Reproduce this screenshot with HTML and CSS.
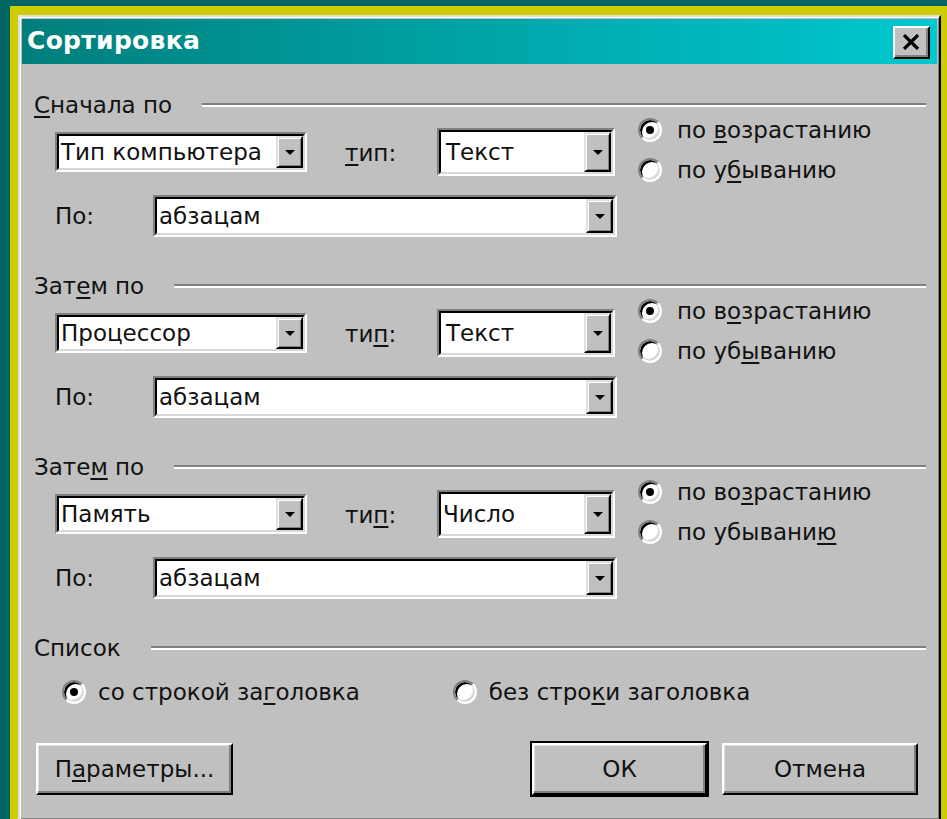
FILE: index.html
```html
<!DOCTYPE html>
<html lang="ru">
<head>
<meta charset="utf-8">
<title>Сортировка</title>
<link rel="stylesheet" href="styles.css">
</head>
<body>
<div class="frame">
  <div class="dialog">
    <div class="titlebar">
      <span class="title">Сортировка</span>
      <button class="close" type="button" aria-label="Закрыть">
        <svg width="18" height="16" viewBox="0 0 18 16"><path d="M2 1 L16 15 M16 1 L2 15" stroke="#000" stroke-width="3.2" fill="none"/></svg>
      </button>
    </div>

    <div class="content">
      <section class="group">
        <div class="legend"><span><u>С</u>начала по</span><i class="rule"></i></div>
        <div class="row-main">
          <div class="combo combo-key"><div class="field"><span class="value">Тип компьютера</span><span class="drop"><i></i></span></div></div>
          <span class="lbl lbl-type"><u>т</u>ип:</span>
          <div class="combo combo-type"><div class="field"><span class="value pad">Текст</span><span class="drop"><i></i></span></div></div>
          <div class="radios">
            <div class="radio"><span class="dot on"></span><span class="text">по <u>в</u>озрастанию</span></div>
            <div class="radio"><span class="dot"></span><span class="text">по у<u>б</u>ыванию</span></div>
          </div>
        </div>
        <div class="row-by">
          <span class="lbl lbl-by">По:</span>
          <div class="combo combo-by"><div class="field"><span class="value">абзацам</span><span class="drop"><i></i></span></div></div>
        </div>
      </section>

      <section class="group">
        <div class="legend"><span>Зат<u>е</u>м по</span><i class="rule"></i></div>
        <div class="row-main">
          <div class="combo combo-key"><div class="field"><span class="value">Процессор</span><span class="drop"><i></i></span></div></div>
          <span class="lbl lbl-type">ти<u>п</u>:</span>
          <div class="combo combo-type"><div class="field"><span class="value pad">Текст</span><span class="drop"><i></i></span></div></div>
          <div class="radios">
            <div class="radio"><span class="dot on"></span><span class="text">по в<u>о</u>зрастанию</span></div>
            <div class="radio"><span class="dot"></span><span class="text">по уб<u>ы</u>ванию</span></div>
          </div>
        </div>
        <div class="row-by">
          <span class="lbl lbl-by">По:</span>
          <div class="combo combo-by"><div class="field"><span class="value">абзацам</span><span class="drop"><i></i></span></div></div>
        </div>
      </section>

      <section class="group">
        <div class="legend"><span>Зате<u>м</u> по</span><i class="rule"></i></div>
        <div class="row-main">
          <div class="combo combo-key"><div class="field"><span class="value">Память</span><span class="drop"><i></i></span></div></div>
          <span class="lbl lbl-type">ти<u>п</u>:</span>
          <div class="combo combo-type"><div class="field"><span class="value">Число</span><span class="drop"><i></i></span></div></div>
          <div class="radios">
            <div class="radio"><span class="dot on"></span><span class="text">по во<u>з</u>растанию</span></div>
            <div class="radio"><span class="dot"></span><span class="text">по убывани<u>ю</u></span></div>
          </div>
        </div>
        <div class="row-by">
          <span class="lbl lbl-by">По:</span>
          <div class="combo combo-by"><div class="field"><span class="value">абзацам</span><span class="drop"><i></i></span></div></div>
        </div>
      </section>

      <section class="group group-list">
        <div class="legend"><span>Список</span><i class="rule"></i></div>
        <div class="row-list">
          <div class="radio radio-with"><span class="dot on"></span><span class="text">со строкой за<u>г</u>оловка</span></div>
          <div class="radio radio-without"><span class="dot"></span><span class="text">без стро<u>к</u>и заголовка</span></div>
        </div>
      </section>

      <div class="buttons">
        <button class="btn btn-params" type="button">П<u>а</u>раметры...</button>
        <span class="spacer"></span>
        <button class="btn btn-ok" type="button">ОК</button>
        <button class="btn btn-cancel" type="button">Отмена</button>
      </div>
    </div>
  </div>
</div>
</body>
</html>
```

FILE: styles.css
```css
html, body {
  margin: 0;
  padding: 0;
}

body {
  background: #006662;
  height: 819px;
  overflow: hidden;
  font-family: "DejaVu Sans", "Liberation Sans", sans-serif;
  font-size: 23px;
  color: #111;
}

u {
  text-decoration: underline;
  text-underline-offset: 3px;
  text-decoration-thickness: 2px;
}

/* yellow desktop frame around the window */
.frame {
  margin: 6px 0 0 10px;
  height: 813px;
  box-sizing: border-box;
  padding: 9px 6px 0 8px;
  background: #cccc00;
}

.dialog {
  height: 806px;
  box-sizing: border-box;
  background: #c0c0c0;
  border: 2px solid;
  border-color: #e0e0e0 #000 #000 #e0e0e0;
  box-shadow: inset 1px 1px 0 #fff, inset -1px -1px 0 #808080;
  padding: 2px;
}

/* caption */
.titlebar {
  height: 45px;
  display: flex;
  align-items: center;
  padding: 0 7px 0 5px;
  background: linear-gradient(to right, #007e7c 0%, #00a8ac 55%, #00c8cf 100%);
}

.title {
  flex: 1;
  color: #fff;
  font-weight: bold;
  font-size: 25px;
  letter-spacing: 0.3px;
  margin-top: -2px;
}

.close {
  width: 37px;
  height: 33px;
  margin-top: 2px;
  padding: 0;
  display: flex;
  align-items: center;
  justify-content: center;
  background: #c0c0c0;
  border: 2px solid;
  border-color: #fff #000 #000 #fff;
  box-shadow: inset -2px -2px 0 #808080;
}

.close svg {
  margin: -2px 0 0 -1px;
}

/* dialog body */
.content {
  padding: 29px 11px 0 12px;
}

.group {
  margin-bottom: 37px;
}

.legend {
  height: 24px;
  display: flex;
  align-items: center;
  line-height: 24px;
}

.rule {
  flex: 1;
  height: 0;
  margin-left: 30px;
  border-top: 2px solid #808080;
  border-bottom: 2px solid #fff;
}

.row-main {
  margin-top: 1px;
  height: 68px;
  display: flex;
  align-items: center;
  padding-left: 21px;
}

.row-by {
  margin-top: 9px;
  display: flex;
  align-items: center;
  padding-left: 21px;
}

.lbl {
  line-height: 24px;
}

.lbl-type {
  width: 92px;
  margin-left: 38px;
  padding-top: 2px;
  box-sizing: border-box;
}

.lbl-by {
  width: 98px;
}

/* sunken combo box */
.combo {
  box-sizing: border-box;
  border: 2px solid;
  border-color: #808080 #fff #fff #808080;
}

.field {
  height: 100%;
  box-sizing: border-box;
  border: 2px solid;
  border-color: #000 #d8d8d8 #d8d8d8 #000;
  background: #fff;
  display: flex;
  align-items: stretch;
}

.value {
  flex: 1;
  display: flex;
  align-items: center;
  padding-left: 2px;
  white-space: nowrap;
  overflow: hidden;
}

.value.pad {
  padding-left: 5px;
}

.drop {
  width: 27px;
  box-sizing: border-box;
  background: #c0c0c0;
  border: 2px solid;
  border-color: #e0e0e0 #000 #000 #e0e0e0;
  box-shadow: inset 1px 1px 0 #fff, inset -1px -1px 0 #808080;
  display: flex;
  align-items: center;
  justify-content: center;
}

.drop i {
  width: 0;
  height: 0;
  border-left: 5px solid transparent;
  border-right: 5px solid transparent;
  border-top: 5px solid #000;
}

.combo-key {
  width: 252px;
  height: 40px;
}

.combo-type {
  width: 178px;
  height: 48px;
}

.combo-by {
  width: 464px;
  height: 42px;
}

/* radio buttons */
.radios {
  align-self: flex-start;
  margin-left: 23px;
  display: flex;
  flex-direction: column;
  gap: 16px;
}

.radio {
  height: 24px;
  display: flex;
  align-items: center;
  white-space: nowrap;
}

.dot {
  width: 24px;
  height: 24px;
  box-sizing: border-box;
  margin-right: 15px;
  border-radius: 50%;
  background: #fff;
  border: 2px solid;
  border-color: #808080 #fff #fff #808080;
  box-shadow: inset 2px 2px 0 #000, inset -2px -2px 0 #d8d8d8;
  position: relative;
  flex: none;
}

.dot.on::after {
  content: "";
  position: absolute;
  left: 6px;
  top: 6px;
  width: 8px;
  height: 8px;
  border-radius: 50%;
  background: #000;
}

.group-list {
  margin-bottom: 0;
}

.row-list {
  margin-top: 20px;
  display: flex;
  align-items: center;
  padding-left: 28px;
}

.radio-with .dot,
.radio-without .dot {
  margin-right: 12px;
}

.radio-without {
  margin-left: 93px;
}

/* push buttons */
.buttons {
  margin-top: 39px;
  display: flex;
  align-items: center;
  padding-left: 2px;
}

.spacer {
  flex: 1;
}

.btn {
  height: 52px;
  box-sizing: border-box;
  font: inherit;
  color: #111;
  background: #c0c0c0;
  border: 2px solid;
  border-color: #fff #000 #000 #fff;
  box-shadow: inset -2px -2px 0 #808080, inset 1px 1px 0 #e0e0e0;
  padding: 0;
}

.btn-params {
  width: 197px;
}

.btn-ok {
  width: 175px;
  outline: 2px solid #000;
  outline-offset: 0;
}

.btn-cancel {
  width: 196px;
  margin-left: 15px;
  margin-right: 8px;
}
```
